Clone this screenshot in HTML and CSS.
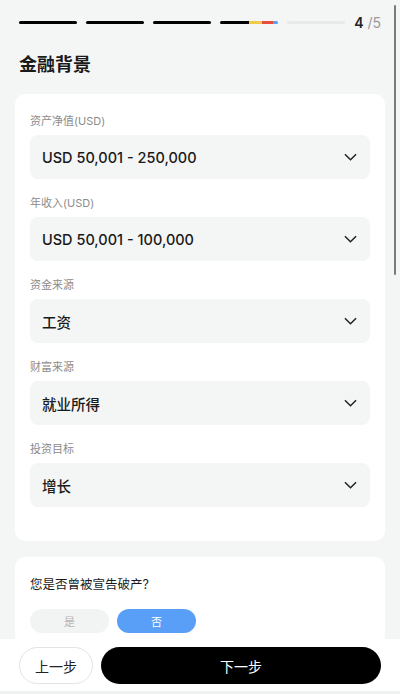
FILE: index.html
```html
<!DOCTYPE html>
<html lang="zh-CN">
  <head>
      <meta charset="UTF-8">
      <meta name="viewport" content="width=device-width, initial-scale=1.0">
      <title>金融背景</title>
      <link rel="stylesheet" href="styles.css">
  </head>
  <body>
    <div class="progress">
      <div class="steps">
        <span class="step done"></span>
        <span class="step done"></span>
        <span class="step done"></span>
        <span class="step current">
          <i class="c-black"></i><i class="c-yellow"></i><i class="c-red"></i><i class="c-blue"></i>
        </span>
        <span class="step"></span>
      </div>
      <div class="count"><b>4</b> <span>/5</span></div>
    </div>

    <h1 class="title">金融背景</h1>

    <div class="card">
      <div class="field">
        <label>资产净值(USD)</label>
        <div class="select"><span>USD 50,001 - 250,000</span><svg viewBox="0 0 14 8"><path d="M1 1l6 6 6-6"/></svg></div>
      </div>
      <div class="field">
        <label>年收入(USD)</label>
        <div class="select"><span>USD 50,001 - 100,000</span><svg viewBox="0 0 14 8"><path d="M1 1l6 6 6-6"/></svg></div>
      </div>
      <div class="field">
        <label>资金来源</label>
        <div class="select"><span>工资</span><svg viewBox="0 0 14 8"><path d="M1 1l6 6 6-6"/></svg></div>
      </div>
      <div class="field">
        <label>财富来源</label>
        <div class="select"><span>就业所得</span><svg viewBox="0 0 14 8"><path d="M1 1l6 6 6-6"/></svg></div>
      </div>
      <div class="field">
        <label>投资目标</label>
        <div class="select"><span>增长</span><svg viewBox="0 0 14 8"><path d="M1 1l6 6 6-6"/></svg></div>
      </div>
    </div>

    <div class="card question">
      <p>您是否曾被宣告破产?</p>
      <div class="choices">
        <button class="choice">是</button>
        <button class="choice active">否</button>
      </div>
    </div>

    <div class="footer">
      <button class="btn-prev">上一步</button>
      <button class="btn-next">下一步</button>
    </div>

    <div class="scrollbar"></div>
  </body>
</html>
```

FILE: styles.css
```css
body {
    font-family: Inter, "Noto Sans CJK SC", sans-serif;
    background-color: #f4f5f5;
    margin: 0;
    padding: 0 0 120px;
    color: #1a1a1a;
}
.progress {
    display: flex;
    align-items: center;
    height: 20px;
    padding: 12px 19px 0;
}
.steps {
    display: flex;
    gap: 9px;
    width: 326px;
}
.step {
    flex: 1;
    height: 3px;
    border-radius: 2px;
    background-color: #e8e9e9;
    display: flex;
    overflow: hidden;
}
.step.done {
    background-color: #000;
}
.step i {
    display: block;
    height: 100%;
}
.c-black { width: 29px; background-color: #000; }
.c-yellow { width: 13px; background-color: #f2c94c; }
.c-red { width: 11px; background-color: #eb4d3d; }
.c-blue { width: 5px; background-color: #5aa2f7; }
.count {
    margin-left: auto;
    font-size: 14px;
    color: #999;
}
.count b {
    color: #222;
    font-weight: 600;
}
.title {
    margin: 21px 19px 0;
    font-size: 18px;
    line-height: 24px;
    font-weight: 700;
}
.card {
    background-color: #fff;
    border-radius: 10px;
    margin: 17px 15px 0;
    padding: 20px 15px 34px;
}
.field + .field {
    margin-top: 17px;
}
.field label {
    display: block;
    font-size: 11px;
    line-height: 14px;
    color: #8c8c8c;
    margin-bottom: 7px;
}
.select {
    height: 44px;
    background-color: #f4f5f5;
    border-radius: 8px;
    display: flex;
    align-items: center;
    justify-content: space-between;
    padding: 0 13px 0 12px;
    font-size: 14.5px;
    font-weight: 500;
}
.select svg {
    width: 13px;
    height: 8px;
    fill: none;
    stroke: #222;
    stroke-width: 1.6;
}
.question {
    margin-top: 16px;
    padding: 20px 15px 30px;
}
.question p {
    margin: 0 0 16px;
    font-size: 12.5px;
    line-height: 16px;
}
.choices {
    display: flex;
    gap: 8px;
}
.choice {
    width: 79px;
    height: 24px;
    border: none;
    border-radius: 12px;
    font-family: inherit;
    font-size: 11px;
    background-color: #f2f3f3;
    color: #b5b5b5;
}
.choice.active {
    background-color: #599ff7;
    color: #fff;
}
.footer {
    position: fixed;
    left: 0;
    right: 0;
    bottom: 0;
    height: 55px;
    background-color: #fff;
    border-bottom: 3px solid #f0f1f1;
    display: flex;
    gap: 8px;
    padding: 8px 19px 0;
    box-sizing: border-box;
}
.footer button {
    height: 37px;
    border-radius: 19px;
    font-family: inherit;
    font-size: 14px;
    cursor: pointer;
}
.btn-prev {
    width: 74px;
    background-color: #fff;
    border: 1px solid #e3e3e3;
    color: #222;
}
.btn-next {
    flex: 1;
    background-color: #000;
    border: none;
    color: #fff;
}
.scrollbar {
    position: fixed;
    top: 5px;
    right: 4px;
    width: 2px;
    height: 270px;
    background-color: #7a7a7a;
    border-radius: 1px;
}
```
